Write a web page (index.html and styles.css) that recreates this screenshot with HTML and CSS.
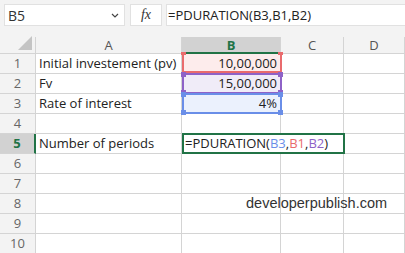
FILE: index.html
```html
<!DOCTYPE html>
<html lang="en">
<head>
    <meta charset="UTF-8">
    <title>PDURATION</title>
    <link rel="stylesheet" href="styles.css">
</head>
<body>

    <div class="formula-bar">
        <div class="name-box">
            <span>B5</span>
            <svg class="chevron" width="8" height="5" viewBox="0 0 8 5"><path d="M1 1 L4 4 L7 1" fill="none" stroke="#444" stroke-width="1.2"/></svg>
        </div>
        <div class="fx-box"><span class="fx">fx</span></div>
        <div class="formula-input">=PDURATION(B3,B1,B2)</div>
    </div>

    <div class="sheet">
        <div class="grid">
            <div class="corner"><div class="tri"></div></div>
            <div class="col-head">A</div>
            <div class="col-head active">B</div>
            <div class="col-head">C</div>
            <div class="col-head">D</div>

            <div class="row-head">1</div>
            <div class="cell">Initial investement (pv)</div>
            <div class="cell num ref-red">10,00,000</div>
            <div class="cell"></div>
            <div class="cell"></div>

            <div class="row-head">2</div>
            <div class="cell">Fv</div>
            <div class="cell num ref-purple">15,00,000</div>
            <div class="cell"></div>
            <div class="cell"></div>

            <div class="row-head">3</div>
            <div class="cell">Rate of interest</div>
            <div class="cell num ref-blue">4%</div>
            <div class="cell"></div>
            <div class="cell"></div>

            <div class="row-head">4</div>
            <div class="cell"></div>
            <div class="cell"></div>
            <div class="cell"></div>
            <div class="cell"></div>

            <div class="row-head active">5</div>
            <div class="cell">Number of periods</div>
            <div class="cell"></div>
            <div class="cell"></div>
            <div class="cell"></div>

            <div class="row-head">6</div>
            <div class="cell"></div>
            <div class="cell"></div>
            <div class="cell"></div>
            <div class="cell"></div>

            <div class="row-head">7</div>
            <div class="cell"></div>
            <div class="cell"></div>
            <div class="cell"></div>
            <div class="cell"></div>

            <div class="row-head">8</div>
            <div class="cell"></div>
            <div class="cell"></div>
            <div class="cell"></div>
            <div class="cell"></div>

            <div class="row-head">9</div>
            <div class="cell"></div>
            <div class="cell"></div>
            <div class="cell"></div>
            <div class="cell"></div>

            <div class="row-head">10</div>
            <div class="cell"></div>
            <div class="cell"></div>
            <div class="cell"></div>
            <div class="cell"></div>
        </div>

        <!-- reference outlines while editing B5 -->
        <div class="ref-box box-red"><i class="h tl"></i><i class="h tr"></i></div>
        <div class="ref-box box-purple"><i class="h tl"></i><i class="h tr"></i><i class="h bl"></i><i class="h br"></i></div>
        <div class="ref-box box-blue"><i class="h tl"></i><i class="h tr"></i><i class="h bl"></i><i class="h br"></i></div>

        <div class="editor">=PDURATION(<span class="c-blue">B3</span>,<span class="c-red">B1</span>,<span class="c-purple">B2</span>)</div>

        <div class="watermark">developerpublish.com</div>
    </div>

</body>
</html>
```

FILE: styles.css
```css
body {
    margin: 0;
    width: 405px;
    height: 253px;
    overflow: hidden;
    background: #fff;
    font-family: 'Open Sans', 'Noto Sans', sans-serif;
    color: #222;
}

.formula-bar {
    display: flex;
    gap: 4px;
    padding: 4px 0 0 4px;
    height: 33px;
    box-sizing: border-box;
    background: #f3f3f3;
}

.name-box {
    width: 121px;
    height: 22px;
    box-sizing: border-box;
    background: #fff;
    border: 1px solid #e1e1e1;
    display: flex;
    align-items: center;
    justify-content: space-between;
    padding: 0 5px 0 3px;
    font-size: 14px;
    color: #333;
}

.fx-box {
    width: 32px;
    height: 22px;
    box-sizing: border-box;
    margin-left: 1px;
    background: #fff;
    border: 1px solid #e1e1e1;
    display: flex;
    align-items: center;
    justify-content: center;
}

.fx {
    font-family: 'Liberation Serif', serif;
    font-style: italic;
    font-size: 14px;
    color: #333;
}

.formula-input {
    flex: 1;
    height: 22px;
    box-sizing: border-box;
    background: #fff;
    border: 1px solid #e1e1e1;
    border-right: none;
    padding-left: 1px;
    font-size: 13px;
    line-height: 20px;
    color: #222;
}

.sheet {
    position: relative;
    background: #f3f3f3;
    padding-top: 4px;
}

.grid {
    display: grid;
    grid-template-columns: 36px 146px 99px 63px 1fr;
    grid-template-rows: 17px repeat(10, 20px);
    background: #fff;
}

.corner, .col-head {
    background: #f3f3f3;
    border-right: 1px solid #d4d4d4;
    border-bottom: 1px solid #d4d4d4;
    box-sizing: border-box;
}

.corner {
    position: relative;
}

.tri {
    position: absolute;
    right: 3px;
    bottom: 3px;
    width: 0;
    height: 0;
    border-left: 14px solid transparent;
    border-bottom: 14px solid #c4c4c4;
}

.col-head {
    text-align: center;
    font-size: 13px;
    line-height: 16px;
    color: #555;
}

.col-head.active {
    background: #d2d2d2;
    border-bottom: 2px solid #217346;
    color: #217346;
    font-weight: bold;
}

.row-head {
    background: #f3f3f3;
    border-right: 1px solid #d4d4d4;
    border-bottom: 1px solid #d4d4d4;
    box-sizing: border-box;
    text-align: center;
    font-size: 13px;
    line-height: 19px;
    color: #666;
}

.row-head.active {
    background: #d2d2d2;
    border-right: 2px solid #217346;
    color: #217346;
    font-weight: bold;
}

.cell {
    border-right: 1px solid #d4d4d4;
    border-bottom: 1px solid #d4d4d4;
    box-sizing: border-box;
    padding: 0 3px;
    font-size: 13px;
    line-height: 19px;
    white-space: nowrap;
    color: #222;
}

.num {
    text-align: right;
}

.ref-red { background: #fdecec; }
.ref-purple { background: #f0ecf8; }
.ref-blue { background: #ebf1fd; }

.ref-box {
    position: absolute;
    left: 182px;
    width: 100px;
    height: 21px;
    box-sizing: border-box;
    border-style: solid;
    border-width: 2px;
}

.box-red { top: 20px; border-color: #e96b6d; border-top: none; height: 20px; }
.box-purple { top: 40px; border-color: #8e62c7; }
.box-blue { top: 60px; border-color: #6a8ee8; }

.h {
    position: absolute;
    width: 5px;
    height: 5px;
}

.box-red .h { background: #e96b6d; }
.box-purple .h { background: #8e62c7; }
.box-blue .h { background: #6a8ee8; }

.h.tl { left: -3px; top: -3px; }
.h.tr { right: -3px; top: -3px; }
.h.bl { left: -3px; bottom: -3px; }
.h.br { right: -3px; bottom: -3px; }

.box-red .h { top: -1px; height: 3px; }

.editor {
    position: absolute;
    left: 182px;
    top: 100px;
    width: 163px;
    height: 21px;
    box-sizing: border-box;
    border: 2px solid #217346;
    background: #fff;
    padding-left: 1px;
    font-size: 13px;
    line-height: 17px;
    color: #222;
}

.c-blue { color: #6a8ee8; }
.c-red { color: #e96b6d; }
.c-purple { color: #8e62c7; }

.watermark {
    position: absolute;
    left: 246px;
    top: 162px;
    font-family: 'Liberation Sans', Arial, sans-serif;
    font-size: 14.5px;
    color: #333;
}
```
